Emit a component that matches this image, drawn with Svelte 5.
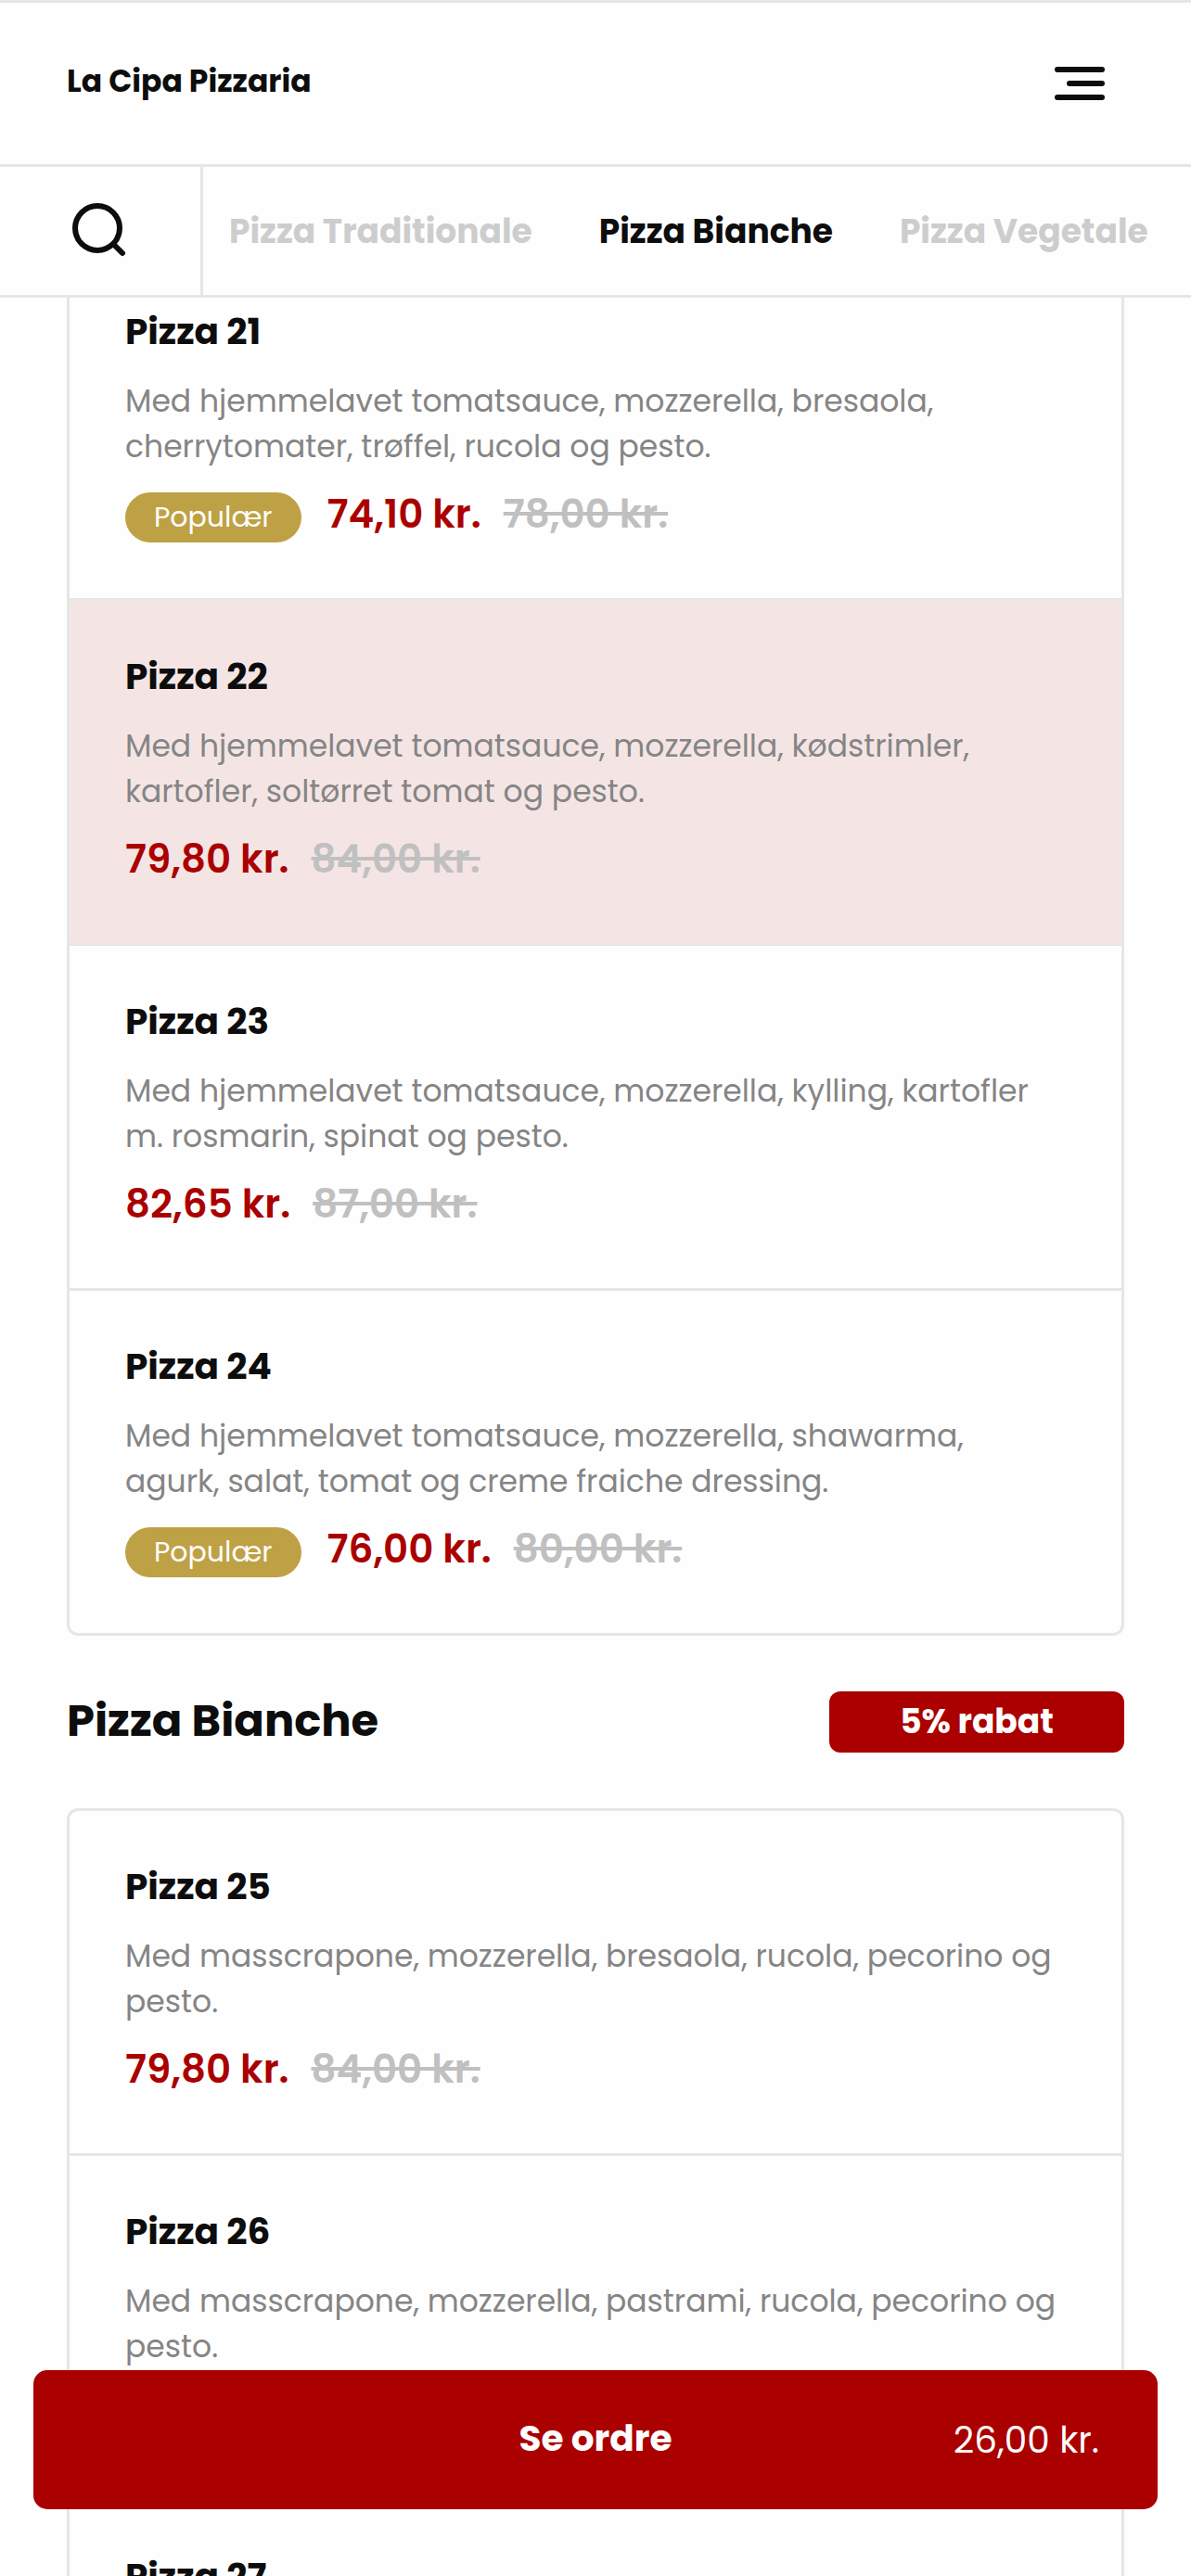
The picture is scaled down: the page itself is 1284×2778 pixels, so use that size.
<script>
  const categories = ['Pizza Traditionale', 'Pizza Bianche', 'Pizza Vegetale']
  let active = 'Pizza Bianche'
  let selected = 22

  const sections = [
    {
      items: [
        { id: 21, text: 'Med hjemmelavet tomatsauce, mozzerella, bresaola, cherrytomater, trøffel, rucola og pesto.', price: '74,10', old: '78,00', popular: true },
        { id: 22, text: 'Med hjemmelavet tomatsauce, mozzerella, kødstrimler, kartofler, soltørret tomat og pesto.', price: '79,80', old: '84,00' },
        { id: 23, text: 'Med hjemmelavet tomatsauce, mozzerella, kylling, kartofler m. rosmarin, spinat og pesto.', price: '82,65', old: '87,00' },
        { id: 24, text: 'Med hjemmelavet tomatsauce, mozzerella, shawarma, agurk, salat, tomat og creme fraiche dressing.', price: '76,00', old: '80,00', popular: true }
      ]
    },
    {
      name: 'Pizza Bianche',
      discount: '5% rabat',
      items: [
        { id: 25, text: 'Med masscrapone, mozzerella, bresaola, rucola, pecorino og pesto.', price: '79,80', old: '84,00' },
        { id: 26, text: 'Med masscrapone, mozzerella, pastrami, rucola, pecorino og pesto.', price: '79,80', old: '84,00' },
        { id: 27 }
      ]
    }
  ]
</script>

<div class="page">
  <header>
    <a class="brand" href="/">La Cipa Pizzaria</a>
    <button class="icon" aria-label="Menu">
      <svg width="60" height="60" viewBox="0 0 60 60">
        <path d="M6 15H54M19 30H54M6 45H54" />
      </svg>
    </button>
  </header>

  <nav>
    <button class="search" aria-label="Søg">
      <svg width="66" height="66" viewBox="0 0 66 66">
        <circle cx="33" cy="30" r="24" />
        <path d="M51 48L60 57" />
      </svg>
    </button>
    <div class="tabs">
      {#each categories as category}
        <button class="tab" class:active={category === active} on:click={() => active = category}>{category}</button>
      {/each}
    </div>
  </nav>

  <main>
    {#each sections as section}
      <section>
        {#if section.name}
          <div class="heading">
            <h2>{section.name}</h2>
            <span class="discount">{section.discount}</span>
          </div>
        {/if}
        <div class="list">
          {#each section.items as item}
            <button class="item" class:selected={item.id === selected} on:click={() => selected = item.id}>
              <strong class="name">Pizza {item.id}</strong>
              {#if item.text}
                <span class="text">{item.text}</span>
                <span class="prices">
                  {#if item.popular}
                    <span class="popular">Populær</span>
                  {/if}
                  <span class="price">{item.price} kr.</span>
                  <s>{item.old} kr.</s>
                </span>
              {/if}
            </button>
          {/each}
        </div>
      </section>
    {/each}
  </main>

  <button class="order">
    <span class="label">Se ordre</span>
    <span class="total">26,00 kr.</span>
  </button>
</div>

<style>
  .page {
    position: relative;
    display: flex;
    flex-direction: column;
    height: 100vh;
    overflow: hidden;
    background: #fefefe;
    color: #0d0d0d;
    font-family: Poppins, Inter, sans-serif;
  }
  button {
    margin: 0;
    padding: 0;
    border: 0;
    background: none;
    color: inherit;
    font: inherit;
    text-align: left;
    cursor: pointer;
  }
  svg {
    display: block;
    fill: none;
    stroke: #0d0d0d;
    stroke-width: 6;
    stroke-linecap: round;
  }
  header {
    display: flex;
    flex: none;
    align-items: center;
    justify-content: space-between;
    height: 174px;
    padding: 0 90px 0 72px;
    border-top: 3px solid #e6e6e6;
    border-bottom: 3px solid #e6e6e6;
  }
  .brand {
    padding-bottom: 4px;
    color: inherit;
    font-size: 33px;
    font-weight: 700;
    text-decoration: none;
  }
  nav {
    display: flex;
    flex: none;
    height: 138px;
    border-bottom: 3px solid #e6e6e6;
  }
  .search {
    width: 219px;
    padding-left: 72px;
    border-right: 3px solid #e6e6e6;
  }
  .tabs {
    display: flex;
    flex: 1;
    gap: 72px;
    padding-left: 28px;
    overflow: hidden;
  }
  .tab {
    color: #cdcdcd;
    font-size: 36px;
    font-weight: 700;
    white-space: nowrap;
  }
  .tab.active {
    color: #0d0d0d;
  }
  main {
    flex: 1;
    min-height: 0;
    padding: 0 72px;
    overflow: hidden;
  }
  section:first-child {
    margin-top: -48px;
  }
  .list {
    border: 3px solid #e6e6e6;
    border-radius: 12px;
    overflow: hidden;
  }
  .item {
    display: flex;
    flex-direction: column;
    width: 100%;
    padding: 52px 60px 60px;
    border-bottom: 3px solid #e6e6e6;
  }
  .item:last-child {
    border-bottom: 0;
  }
  .item.selected {
    background: #f4e5e4;
  }
  .name {
    font-size: 39px;
    font-weight: 700;
    line-height: 60px;
  }
  .text {
    margin-top: 20px;
    color: #858585;
    font-size: 33px;
    line-height: 49px;
  }
  .prices {
    display: flex;
    align-items: flex-start;
    min-height: 54px;
    margin-top: 25px;
    font-size: 42px;
    font-weight: 600;
    line-height: 48px;
  }
  .popular {
    margin-right: 28px;
    padding: 0 31px;
    border-radius: 27px;
    background: #bfa145;
    color: #fefefe;
    font-size: 30px;
    font-weight: 400;
    line-height: 54px;
  }
  .price {
    color: #a00;
  }
  s {
    margin-left: 24px;
    color: #c0c0c0;
  }
  .heading {
    display: flex;
    align-items: flex-start;
    justify-content: space-between;
    padding: 60px 0;
  }
  h2 {
    margin: 0;
    font-size: 48px;
    font-weight: 700;
    line-height: 63px;
  }
  .discount {
    width: 318px;
    border-radius: 12px;
    background: #a00;
    color: #fefefe;
    font-size: 36px;
    font-weight: 700;
    line-height: 66px;
    text-align: center;
  }
  .order {
    position: absolute;
    right: 36px;
    bottom: 72px;
    left: 36px;
    display: grid;
    grid-template-columns: 1fr auto 1fr;
    align-items: center;
    height: 150px;
    padding: 0 63px;
    border-radius: 15px;
    background: #a00;
    color: #fefefe;
    font-size: 39px;
  }
  .label {
    grid-column: 2;
    padding-bottom: 3px;
    font-weight: 700;
  }
  .total {
    text-align: right;
  }
</style>
